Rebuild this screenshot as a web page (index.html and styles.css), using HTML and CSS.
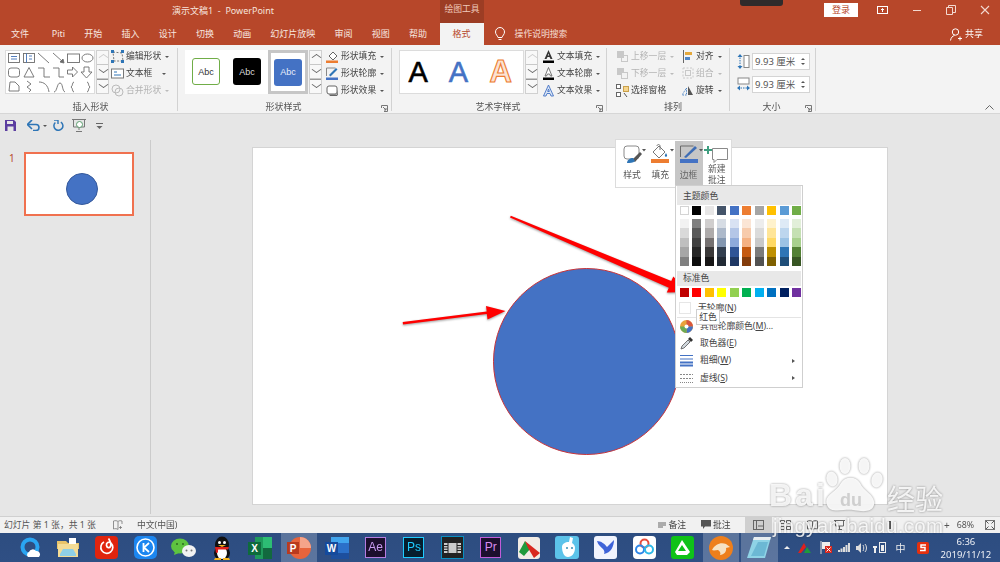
FILE: index.html
```html
<!DOCTYPE html>
<html lang="zh">
<head>
<meta charset="utf-8">
<title>演示文稿1 - PowerPoint</title>
<link rel="stylesheet" href="styles.css">
</head>
<body>
<div class="app">
  <header class="titlebar">
    <div class="title">演示文稿1&nbsp; - &nbsp;PowerPoint</div>
    <div class="ctx">绘图工具</div>
    <div class="webcam"></div>
    <button class="login">登录</button>
    <div class="winbtns">
      <svg width="12" height="10" viewBox="0 0 12 10"><rect x=".5" y="1.5" width="10" height="7" fill="none" stroke="#fff"/><path d="M5.5 7V3.5M4 5l1.5-1.5L7 5" stroke="#fff" fill="none"/></svg>
      <svg width="10" height="10" viewBox="0 0 10 10"><path d="M1 5.5h8" stroke="#f3d9d0"/></svg>
      <svg width="10" height="10" viewBox="0 0 10 10"><path d="M.5 2.5h6v7h-6zM2.500 2.500v-2h7v7h-3" fill="none" stroke="#f3d9d0"/></svg>
      <svg width="10" height="10" viewBox="0 0 10 10"><path d="M1 1l8 8M9 1l-8 8" stroke="#f3d9d0" stroke-width="1.1"/></svg>
    </div>
  </header>

  <nav class="tabs">
    <span class="tab first">文件</span><span class="tab">Piti</span><span class="tab">开始</span><span class="tab">插入</span><span class="tab">设计</span><span class="tab">切换</span><span class="tab">动画</span><span class="tab">幻灯片放映</span><span class="tab">审阅</span><span class="tab">视图</span><span class="tab">帮助</span><span class="tab active">格式</span>
    <svg class="bulb" width="12" height="14" viewBox="0 0 12 14"><path d="M4 10.500C3.500 8.500 1.500 7.500 1.500 5a4.500 4.500 0 0 1 9 0c0 2.500-2 3.500-2.500 5.500zM4.500 12.500h3" fill="none" stroke="#fff" stroke-width="1"/></svg>
    <span class="search">操作说明搜索</span>
    <span class="share">
      <svg width="12" height="13" viewBox="0 0 12 13"><circle cx="5.500" cy="4" r="3.200" fill="none" stroke="#fff"/><path d="M.5 12.500c.5-3 2-4.500 4-5M8 10.500h4M10 8.500v4" fill="none" stroke="#fff"/></svg>
      共享
    </span>
  </nav>

  <section class="ribbon">
    <div class="group g-shapes">
      <div class="grow">
        <div class="gallery shapes">
          <svg width="89" height="45" viewBox="5 50 89 45" fill="none" stroke="#6d6d6d" stroke-width=".9">
            <rect x="7.500" y="53.500" width="11" height="9"/><path d="M10 56.500h6M10 59h6" stroke="#3f6fb5"/>
            <rect x="22.500" y="53.500" width="11" height="9"/><path d="M25.500 53.500v9M28 56h3M28 59h3" stroke="#3f6fb5"/>
            <path d="M37 53l11 10M52 53l10 9"/><path d="M63 63l-4-1 3-3z" fill="#6d6d6d"/>
            <rect x="66.500" y="54" width="12" height="8.500"/><ellipse cx="86.500" cy="58" rx="5.500" ry="4"/>
            <rect x="7.500" y="68" width="11" height="9" rx="2.500"/><path d="M28 67.500l5 9.500H23z"/>
            <path d="M37 68h6v9h6M52 68h6v9h5"/><path d="M66.500 70h5v-3l5 5-5 5v-3h-5zM83 67h5v5h3l-5.500 6-5.500-6h3z"/>
            <path d="M9 82h5l4 4v5H8zM26 81l4 3-4 3 4 3-2 2M38 82c5 0 9 3 10 10M53 92c3 0 3-9 6-9s2 8 5 9"/>
            <path d="M73 82c-2 0-1 4-3 5 2 1 1 5 3 5M86 82c2 0 1 4 3 5-2 1-1 5-3 5"/>
          </svg>
        </div>
        <div class="spin"><i class="up off"></i><i class="dn"></i><i class="more"></i></div>
        <div class="cmds tight">
          <div class="cmd"><svg class="ic" width="13" height="13" viewBox="0 0 13 13"><path d="M2 2l9 1 1 8-9 0z" fill="none" stroke="#777" stroke-dasharray="2 1.500"/><path d="M0 0h3v3H0zM10 0h3v3h-3zM0 10h3v3H0zM10 10h3v3h-3z" fill="#2e75b6"/></svg>编辑形状<b class="caret"></b></div>
          <div class="cmd"><svg class="ic" width="13" height="13" viewBox="0 0 13 13"><rect x=".5" y="2" width="12" height="9" fill="#fff" stroke="#777"/><path d="M3 5h3M3 8h7" stroke="#2e75b6"/></svg>文本框<b class="caret wide"></b></div>
          <div class="cmd off"><svg class="ic" width="13" height="13" viewBox="0 0 13 13"><circle cx="5" cy="5" r="4" fill="none" stroke="#bbb"/><circle cx="8" cy="8" r="4" fill="none" stroke="#bbb"/></svg>合并形状<b class="caret"></b></div>
        </div>
      </div>
      <div class="glabel">插入形状</div>
    </div>

    <div class="group g-style">
      <div class="grow">
        <div class="gallery styles">
          <span class="abc a1">Abc</span><span class="abc a2">Abc</span><span class="sel"><span class="abc a3">Abc</span></span>
        </div>
        <div class="spin big"><i class="up"></i><i class="dn"></i><i class="more"></i></div>
        <div class="cmds">
          <div class="cmd"><svg class="ic" width="13" height="13" viewBox="0 0 13 13"><path d="M3 6l4-4 4 4-4 4z" fill="#fff" stroke="#666"/><path d="M0 10.500h12v2.500H0z" fill="#ed7d31"/></svg>形状填充<b class="caret"></b></div>
          <div class="cmd"><svg class="ic" width="13" height="13" viewBox="0 0 13 13"><path d="M.5 9V1h9" fill="none" stroke="#888"/><path d="M3 8l7-7 1.500 1.500-7 7z" fill="#2e75b6"/><path d="M0 10.500h12v2.500H0z" fill="#4472c4"/></svg>形状轮廓<b class="caret"></b></div>
          <div class="cmd"><svg class="ic" width="13" height="13" viewBox="0 0 13 13"><rect x="1" y="2" width="10" height="8" rx="2" fill="#fff" stroke="#666"/><path d="M3 10.500h8l1-5v5l-1 1.500H4z" fill="#666"/></svg>形状效果<b class="caret"></b></div>
        </div>
      </div>
      <div class="glabel lau">形状样式<svg class="launch" width="7" height="7" viewBox="0 0 7 7"><path d="M.5 3V.5h6v6H3M2 2l3 3M5 3v2H3" fill="none" stroke="#777"/></svg></div>
    </div>

    <div class="group g-art">
      <div class="grow">
        <div class="gallery arts">
          <span class="art k">A</span><span class="art b">A</span><span class="art o">A</span>
        </div>
        <div class="spin"><i class="up off"></i><i class="dn"></i><i class="more"></i></div>
        <div class="cmds">
          <div class="cmd"><svg class="ic" width="13" height="13" viewBox="0 0 13 13"><path d="M6.500 0L10.500 9H8.500L7.500 7h-2l-1 2h-2zM5.800 5.500h1.400L6.500 3.500z" fill="#333" fill-rule="evenodd"/><path d="M1 10.500h11V13H1z" fill="#000"/></svg>文本填充<b class="caret"></b></div>
          <div class="cmd"><svg class="ic" width="13" height="13" viewBox="0 0 13 13"><path d="M6.500 .5L10 9H8.500L7.500 7h-2l-1 2H3z" fill="#fff" stroke="#555" stroke-width=".8"/><path d="M1 10.500h11V13H1z" fill="#000"/></svg>文本轮廓<b class="caret"></b></div>
          <div class="cmd"><svg class="ic" width="13" height="13" viewBox="0 0 13 13"><path d="M6.500 1L11.500 12H9L8 9.500H5L4 12H1.500zM5.700 7.500h1.600L6.500 5z" fill="#dbe7f6" stroke="#4472c4" stroke-width=".9" fill-rule="evenodd"/></svg>文本效果<b class="caret"></b></div>
        </div>
      </div>
      <div class="glabel lau">艺术字样式<svg class="launch" width="7" height="7" viewBox="0 0 7 7"><path d="M.5 3V.5h6v6H3M2 2l3 3M5 3v2H3" fill="none" stroke="#777"/></svg></div>
    </div>

    <div class="group g-arrange">
      <div class="grow">
        <div class="cmds c1">
          <div class="cmd off"><svg class="ic" width="13" height="13" viewBox="0 0 13 13"><rect x="1" y="1" width="7" height="7" fill="#c8c8c8"/><rect x="5.500" y="5.500" width="6" height="6" fill="none" stroke="#c8c8c8"/></svg>上移一层<b class="caret"></b></div>
          <div class="cmd off"><svg class="ic" width="13" height="13" viewBox="0 0 13 13"><rect x="1" y="1" width="7" height="7" fill="#c8c8c8"/><rect x="5.500" y="5.500" width="6" height="6" fill="#f3f3f3" stroke="#c8c8c8"/></svg>下移一层<b class="caret"></b></div>
          <div class="cmd"><svg class="ic" width="13" height="13" viewBox="0 0 13 13"><rect x=".5" y=".5" width="4" height="4" fill="#fff" stroke="#666"/><rect x=".5" y="8.500" width="4" height="4" fill="#fff" stroke="#666"/><rect x="7.500" y="2.500" width="5" height="5" fill="#f6d58c" stroke="#c9a04c"/><path d="M8 9l3 4" stroke="#555"/></svg>选择窗格</div>
        </div>
        <div class="cmds c2">
          <div class="cmd"><svg class="ic" width="12" height="13" viewBox="0 0 12 13"><path d="M1.500 0v13" stroke="#666"/><rect x="3" y="2" width="7" height="3" fill="#e5a93c"/><rect x="3" y="7" width="5" height="3" fill="#4f86c6"/></svg>对齐<b class="caret"></b></div>
          <div class="cmd off"><svg class="ic" width="12" height="13" viewBox="0 0 12 13"><rect x="1" y="1" width="10" height="10" fill="none" stroke="#c8c8c8" stroke-dasharray="2 1.500"/><rect x="3.500" y="3.500" width="5" height="5" fill="none" stroke="#c8c8c8"/></svg>组合<b class="caret"></b></div>
          <div class="cmd"><svg class="ic" width="12" height="13" viewBox="0 0 12 13"><path d="M6 11V2l5 9z" fill="#555"/><path d="M4.500 11H0L4.500 4z" fill="none" stroke="#4f86c6" stroke-dasharray="1.500 1"/></svg>旋转<b class="caret"></b></div>
        </div>
      </div>
      <div class="glabel">排列</div>
    </div>

    <div class="group g-size">
      <div class="grow col">
        <div class="sizer">
          <svg width="13" height="15" viewBox="0 0 13 15"><rect x="7" y="1.500" width="5" height="12" fill="#fff" stroke="#888"/><path d="M3 1v13" stroke="#2e75b6" stroke-dasharray="1.500 1"/><path d="M3 0l2.500 3h-5zM3 15l2.500-3h-5z" fill="#2e75b6"/></svg>
          <div class="field"><span>9.93 厘米</span><em><i></i><i class="d"></i></em></div>
        </div>
        <div class="sizer">
          <svg width="13" height="15" viewBox="0 0 13 15"><rect x="1" y="1" width="11" height="6" fill="#fff" stroke="#888"/><path d="M1 11h11" stroke="#2e75b6" stroke-dasharray="1.500 1"/><path d="M0 11l3-2.500v5zM13 11l-3-2.500v5z" fill="#2e75b6"/></svg>
          <div class="field"><span>9.93 厘米</span><em><i></i><i class="d"></i></em></div>
        </div>
      </div>
      <div class="glabel lau">大小<svg class="launch" width="7" height="7" viewBox="0 0 7 7"><path d="M.5 3V.5h6v6H3M2 2l3 3M5 3v2H3" fill="none" stroke="#777"/></svg></div>
    </div>
    <svg class="collapse" width="9" height="5" viewBox="0 0 9 5"><path d="M.5 4.500l4-4 4 4" fill="none" stroke="#666"/></svg>
  </section>

  <div class="qat">
    <svg class="q-save" width="11" height="11" viewBox="0 0 11 11"><path d="M0 0h9l2 2v9H0z" fill="#5b3da0"/><path d="M2 1h6v3H2z" fill="#e6e6e6"/><path d="M2.500 6.500h6V11h-6z" fill="#e6e6e6"/></svg>
    <svg class="q-undo" width="14" height="11" viewBox="0 0 14 11"><path d="M1 4.500h8a3 3 0 0 1 0 6H6" fill="none" stroke="#2e75b6" stroke-width="1.600"/><path d="M5 0L.5 4.500 5 9" fill="none" stroke="#2e75b6" stroke-width="1.600"/></svg>
    <b class="caret q-drop"></b>
    <svg class="q-redo" width="11" height="11" viewBox="0 0 11 11"><path d="M3 2A4.500 4.500 0 1 0 8.500 2.500" fill="none" stroke="#2e75b6" stroke-width="1.500" transform="rotate(-10 5.500 6)"/><path d="M1 0h4v4" fill="none" stroke="#2e75b6" stroke-width="1.400"/></svg>
    <svg class="q-show" width="14" height="13" viewBox="0 0 14 13"><path d="M0 .5h14M1.500 1v7h11V1M7 8v3M4 12.500h6" fill="none" stroke="#777"/><circle cx="7.500" cy="5.500" r="3" fill="#fff" stroke="#5b9e6e"/></svg>
    <svg class="q-more" width="7" height="6" viewBox="0 0 7 6"><path d="M0 .5h7" stroke="#666"/><path d="M.5 3h6L3.500 6z" fill="#666"/></svg>
  </div>

  <main class="workspace">
    <aside class="thumbs">
      <span class="num">1</span>
      <div class="thumb"><span class="thumb-dot"></span></div>
    </aside>
    <div class="stage">
      <div class="slide"><span class="circle"></span></div>
    </div>

    <svg class="arrows" width="1000" height="379" viewBox="0 137 1000 379">
      <path d="M510 217.500l.8-1.800 160.500 65.300 2-4.500 15 15.500-21.500.5 2-4.700z" fill="#f00"/>
      <path d="M403 324.500l-.3-2.600 84-10.400-.7-5.500 19.500 5-18 8.500-.7-5.500z" fill="#f00"/>
    </svg>

    <div class="mini">
      <div class="mini-btn"><svg width="28" height="20" viewBox="0 0 28 20"><rect x="6" y="2" width="15" height="13" rx="3" fill="#fff" stroke="#8a8a8a"/><path d="M14 16l8-8 2 2-7 8z" fill="#555"/><path d="M9 19c0-3 3-5 6-5l2 3c-2 2-5 2-8 2z" fill="#2e75b6"/><path d="M24 5h4l-2 2.500z" fill="#555"/></svg><span class="ml">样式</span></div>
      <div class="mini-btn"><svg width="28" height="20" viewBox="0 0 28 20"><path d="M7 8l6-6 6 6-6 6z" fill="#fff" stroke="#777"/><path d="M11 2c0-2 3-2 3 0v4" fill="none" stroke="#777"/><path d="M20 9c1 2 2 3 0 4-2-1-1-2 0-4z" fill="#2e75b6"/><path d="M5 15h18v4H5z" fill="#ed7d31"/><path d="M24 5h4l-2 2.500z" fill="#555"/></svg><span class="ml">填充</span></div>
      <div class="mini-btn on"><svg width="28" height="20" viewBox="0 0 28 20"><path d="M5.500 13V2h13" fill="none" stroke="#6a6a6a"/><path d="M9 13L20 2l2 2L11 14z" fill="#3e6db5"/><path d="M5 15h18v4H5z" fill="#4472c4"/><path d="M24 5h4l-2 2.500z" fill="#555"/></svg><span class="ml">边框</span></div>
      <div class="mini-btn"><svg width="28" height="20" viewBox="0 0 28 20"><path d="M9.500 4.500h15v11H14l-3 3v-3H9.500z" fill="#fff" stroke="#8a8a8a"/><path d="M5 2v8M1 6h8" stroke="#3f9e80" stroke-width="2"/></svg><span class="ml">新建<br>批注</span></div>
    </div>

    <div class="menu">
      <div class="mhead">主题颜色</div>
      <div class="swatches top">
        <i class="w" style="background:#fff"></i><i style="background:#000"></i><i style="background:#e7e6e6"></i><i style="background:#44546a"></i><i style="background:#4472c4"></i><i style="background:#ed7d31"></i><i style="background:#a5a5a5"></i><i style="background:#ffc000"></i><i style="background:#5b9bd5"></i><i style="background:#70ad47"></i>
      </div>
      <div class="shades">
        <div><i style="background:#f2f2f2"></i><i style="background:#d9d9d9"></i><i style="background:#bfbfbf"></i><i style="background:#a6a6a6"></i><i style="background:#808080"></i></div>
        <div><i style="background:#7f7f7f"></i><i style="background:#595959"></i><i style="background:#404040"></i><i style="background:#262626"></i><i style="background:#0d0d0d"></i></div>
        <div><i style="background:#d0cece"></i><i style="background:#aeabab"></i><i style="background:#757171"></i><i style="background:#3a3838"></i><i style="background:#171616"></i></div>
        <div><i style="background:#d6dce4"></i><i style="background:#adb9ca"></i><i style="background:#8497b0"></i><i style="background:#333f4f"></i><i style="background:#222a35"></i></div>
        <div><i style="background:#d9e2f3"></i><i style="background:#b4c6e7"></i><i style="background:#8eaadb"></i><i style="background:#2f5496"></i><i style="background:#1f3864"></i></div>
        <div><i style="background:#fbe5d5"></i><i style="background:#f7cbac"></i><i style="background:#f4b183"></i><i style="background:#c55a11"></i><i style="background:#833c0b"></i></div>
        <div><i style="background:#ededed"></i><i style="background:#dbdbdb"></i><i style="background:#c9c9c9"></i><i style="background:#7b7b7b"></i><i style="background:#525252"></i></div>
        <div><i style="background:#fff2cc"></i><i style="background:#ffe598"></i><i style="background:#ffd965"></i><i style="background:#bf9000"></i><i style="background:#7f6000"></i></div>
        <div><i style="background:#deeaf6"></i><i style="background:#bdd6ee"></i><i style="background:#9cc3e5"></i><i style="background:#2e75b5"></i><i style="background:#1f4e79"></i></div>
        <div><i style="background:#e2efd9"></i><i style="background:#c5e0b3"></i><i style="background:#a8d08d"></i><i style="background:#538135"></i><i style="background:#375623"></i></div>
      </div>
      <div class="mhead second">标准色</div>
      <div class="swatches std">
        <i style="background:#c00000"></i><i style="background:#f00"></i><i style="background:#ffc000"></i><i style="background:#ff0"></i><i style="background:#92d050"></i><i style="background:#00b050"></i><i style="background:#00b0f0"></i><i style="background:#0070c0"></i><i style="background:#002060"></i><i style="background:#7030a0"></i>
      </div>
      <div class="mrow first"><span class="nofill"></span><span>无轮廓(<u>N</u>)</span></div>
      <div class="mrow line"><svg width="13" height="13" viewBox="0 0 13 13"><circle cx="6.500" cy="6.500" r="6.500" fill="#e9a33c"/><path d="M6.500 6.500L6.500 0A6.500 6.500 0 0 1 13 6.500z" fill="#d9573d"/><path d="M6.500 6.500L13 6.500A6.500 6.500 0 0 1 6.500 13z" fill="#4472c4"/><path d="M6.500 6.500L6.500 13A6.500 6.500 0 0 1 0 6.500z" fill="#6cab55"/><circle cx="6.500" cy="6.500" r="2" fill="#fff"/></svg><span>其他轮廓颜色(<u>M</u>)...</span></div>
      <div class="mrow"><svg width="13" height="13" viewBox="0 0 13 13"><path d="M1 12l1-3 6-6 2 2-6 6z" fill="#cfd6dc" stroke="#555" stroke-width=".8"/><path d="M8 2l2-2 3 3-2 2z" fill="#333"/></svg><span>取色器(<u>E</u>)</span></div>
      <div class="mrow"><svg width="13" height="13" viewBox="0 0 13 13"><path d="M0 1.500h13M0 5h13" stroke="#4472c4"/><path d="M0 8.500h13M0 11.500h13" stroke="#4472c4" stroke-width="2"/></svg><span>粗细(<u>W</u>)</span><b class="sub"></b></div>
      <div class="mrow"><svg width="13" height="13" viewBox="0 0 13 13"><path d="M0 2.500h13M0 6.500h13" stroke="#888" stroke-dasharray="2 1"/><path d="M0 10.500h13" stroke="#888" stroke-dasharray="1 1"/></svg><span>虚线(<u>S</u>)</span><b class="sub"></b></div>
    </div>
    <div class="tip">红色</div>
  </main>

  <footer class="status">
    <span class="st-a">幻灯片 第 1 张，共 1 张</span>
    <svg class="st-b" width="10" height="10" viewBox="0 0 10 10"><path d="M5 1.500C4 .5 2 .5.500 1v8C2 8.500 4 8.500 5 9.500V1.500zM5 1.500C6 .5 7.500.5 9 1v3M7.500 6v3M6 7.500h3" fill="none" stroke="#777" stroke-width=".8"/></svg>
    <span class="st-c">中文(中国)</span>
    <span class="st-r">
      <span class="st-item"><svg width="8" height="8" viewBox="0 0 8 8"><path d="M0 2h8M0 4h8M0 6h5" stroke="#666"/></svg>备注</span>
      <span class="st-item"><svg width="10" height="9" viewBox="0 0 10 9"><path d="M0 0h10v6.500H4L2 9V6.500H0z" fill="#555"/></svg>批注</span>
      <span class="view on"><svg width="11" height="10" viewBox="0 0 11 10"><rect x=".5" y=".5" width="10" height="9" fill="none" stroke="#666"/><path d="M3.500 1v8M5 6h5" stroke="#666"/></svg></span>
      <span class="view"><svg width="11" height="10" viewBox="0 0 11 10"><path d="M.5.500h4v3h-4zM6.500.500h4v3h-4zM.5 6.500h4v3h-4zM6.500 6.500h4v3h-4z" fill="none" stroke="#666"/></svg></span>
      <span class="view"><svg width="11" height="10" viewBox="0 0 11 10"><path d="M5.500 1.500C4 .5 2 .5.500 1v8C2 8.500 4 8.500 5.500 9.500 7 8.500 9 8.500 10.500 9V1C9 .5 7 .5 5.500 1.500zV9.500" fill="none" stroke="#666"/></svg></span>
      <span class="view"><svg width="11" height="10" viewBox="0 0 11 10"><path d="M0 .5h11M1.500 1v5h8V1M5.500 6v3M3 9.500h5" fill="none" stroke="#666"/></svg></span>
      <span class="zoomer"><b class="knob"></b><b class="plus">+</b></span>
      <span class="pct">68%</span>
      <svg class="fit" width="10" height="10" viewBox="0 0 10 10"><rect x=".5" y=".5" width="9" height="9" fill="none" stroke="#777"/><path d="M1 1l2.500 2.500M9 1L6.500 3.500M1 9l2.500-2.500M9 9L6.500 6.500" stroke="#555"/></svg>
    </span>
  </footer>

  <div class="taskbar">
    <div class="tb"><svg width="22" height="22" viewBox="0 0 22 22"><circle cx="11" cy="10" r="7.500" fill="none" stroke="#2aa5f2" stroke-width="4"/><path d="M9 20a3 3 0 0 1 1-5 4 4 0 0 1 7-1 3.500 3.500 0 0 1 3 6z" fill="#fff"/></svg></div>
    <div class="tb"><svg width="24" height="22" viewBox="0 0 24 22"><path d="M1 4h9l2 2h11v6H1z" fill="#e9c46a"/><path d="M2 7h20v13H2z" fill="#f4dc96"/><path d="M7 12h10l3 5v2H4v-2z" fill="#8fd0e6"/><path d="M13 1h7v6h-7z" fill="#fff"/></svg></div>
    <div class="tb"><svg width="23" height="23" viewBox="0 0 23 23"><rect width="23" height="23" rx="4" fill="#e0240e"/><path d="M9 6a6 6 0 1 0 7 1c-2-2-5 0-4.500 2.500s3 3 4 1-.5-6-2-8" fill="none" stroke="#fff" stroke-width="1.700"/></svg></div>
    <div class="tb"><svg width="23" height="23" viewBox="0 0 23 23"><rect width="23" height="23" rx="5" fill="#1c86f0"/><circle cx="11.500" cy="11.500" r="8.500" fill="none" stroke="#fff" stroke-width="1.600"/><path d="M9.500 7v9M15 7l-5 4.500 5 4.500" fill="none" stroke="#fff" stroke-width="1.800"/></svg></div>
    <div class="tb"><svg width="25" height="20" viewBox="0 0 25 20"><ellipse cx="9" cy="8" rx="9" ry="7.500" fill="#5ec440"/><path d="M4 13l-1 4 5-2z" fill="#5ec440"/><ellipse cx="18" cy="13" rx="7" ry="6" fill="#f2f2f2"/><circle cx="15.500" cy="12.500" r="1" fill="#777"/><circle cx="20.500" cy="12.500" r="1" fill="#777"/><circle cx="6" cy="6" r="1" fill="#2f6b1f"/><circle cx="12" cy="6" r="1" fill="#2f6b1f"/></svg></div>
    <div class="tb"><svg width="20" height="24" viewBox="0 0 20 24"><ellipse cx="10" cy="9" rx="7" ry="8.500" fill="#111"/><ellipse cx="10" cy="17" rx="8" ry="7" fill="#111"/><ellipse cx="10" cy="17" rx="5" ry="6" fill="#fff"/><circle cx="7.500" cy="6.500" r="1.500" fill="#fff"/><circle cx="12.500" cy="6.500" r="1.500" fill="#fff"/><path d="M3 11h14l-1 2.500H6v3l-2 .5z" fill="#e0201c"/><path d="M6 9h8l-4 2z" fill="#f6b51e"/><path d="M3 22h6v2H2zM11 22h6l1 2h-7z" fill="#f6b51e"/></svg></div>
    <div class="tb"><svg width="24" height="22" viewBox="0 0 24 22"><path d="M7 0h17v22H7z" fill="#1f9a5c"/><path d="M15 0h9v11h-9z" fill="#2dbd74"/><path d="M15 11h9v11h-9z" fill="#12693f"/><rect y="5" width="13" height="13" fill="#0e6b3c"/><text x="6.500" y="15" class="tbtxt" text-anchor="middle" fill="#fff">X</text></svg></div>
    <div class="tb on"><svg width="24" height="22" viewBox="0 0 24 22"><circle cx="13" cy="11" r="11" fill="#e8643c"/><path d="M13 0a11 11 0 0 1 11 11H13z" fill="#f5a48a"/><rect y="5" width="12" height="12" fill="#b93a1e"/><text x="6" y="15" class="tbtxt" text-anchor="middle" fill="#fff">P</text></svg></div>
    <div class="tb"><svg width="24" height="22" viewBox="0 0 24 22"><path d="M6 0h18v22H6z" fill="#2b70c9"/><path d="M6 0h18v6H6z" fill="#41a5ee"/><path d="M6 16h18v6H6z" fill="#1d4f9e"/><rect y="5" width="13" height="13" fill="#154a9c"/><text x="6.500" y="15" class="tbtxt" text-anchor="middle" fill="#fff">W</text></svg></div>
    <div class="tb"><span class="adobe ae">Ae</span></div>
    <div class="tb"><span class="adobe ps">Ps</span></div>
    <div class="tb"><svg width="23" height="23" viewBox="0 0 23 23"><rect x=".5" y=".5" width="22" height="22" fill="#222" stroke="#0a8fc0"/><rect x="3" y="7" width="17" height="10" fill="#ccc"/><path d="M7 7v10M16 7v10M3 9.500h4M3 12h4M3 14.500h4M16 9.500h4M16 12h4M16 14.500h4" stroke="#222"/></svg></div>
    <div class="tb"><span class="adobe pr">Pr</span></div>
    <div class="tb"><svg width="22" height="22" viewBox="0 0 22 22"><rect width="22" height="22" rx="3" fill="#f1ece6"/><path d="M1 15L7 4l5 8-6 7z" fill="#1f9a3c"/><path d="M7 4l15 12-6 5-6-10z" fill="#d9281e"/></svg></div>
    <div class="tb"><svg width="24" height="23" viewBox="0 0 24 23"><rect width="24" height="23" rx="3" fill="#5cc3ea"/><path d="M7 11c0-3 3-5 7-5l1-5 3 1-1 5c2 1 3 3 3 5 0 5-3 9-7 9s-6-5-6-10z" fill="#fff"/><circle cx="12" cy="12" r="1" fill="#3a8fb5"/><circle cx="17" cy="12" r="1" fill="#3a8fb5"/></svg></div>
    <div class="tb"><svg width="23" height="23" viewBox="0 0 23 23"><rect width="23" height="23" rx="3" fill="#f1f4fd"/><path d="M3 5c4 0 8 3 10 6l7-7c0 6-3 13-10 14 1-2 0-4-1-5-2-2-5-4-6-8z" fill="#3e63d8"/></svg></div>
    <div class="tb"><svg width="23" height="23" viewBox="0 0 23 23"><rect width="23" height="23" rx="4" fill="#fff"/><circle cx="11.500" cy="7.500" r="4" fill="none" stroke="#e74b3c" stroke-width="2"/><circle cx="7" cy="13.500" r="4" fill="none" stroke="#2d86e8" stroke-width="2"/><circle cx="16" cy="13.500" r="4" fill="none" stroke="#2db9e8" stroke-width="2"/></svg></div>
    <div class="tb"><svg width="23" height="23" viewBox="0 0 23 23"><rect width="23" height="23" rx="3" fill="#0fc218"/><path d="M11 4l8 12-3 3H6l-2-3z" fill="#fff"/><path d="M11 9l-4 6h8z" fill="#0fc218"/></svg></div>
    <div class="tb on"><svg width="24" height="24" viewBox="0 0 24 24"><circle cx="12" cy="12" r="12" fill="#ee7f1c"/><path d="M3 14c3-6 9-8 14-6l4 3-4 1c1 3-2 7-6 7 1-2 0-4-2-5-2 0-4 1-6 0z" fill="#f6e2c4"/></svg></div>
    <div class="tb on"><svg width="26" height="24" viewBox="0 0 26 24"><path d="M8 1h17l-6 21H1z" fill="#8fd3e6"/><path d="M8 1h17l-1 3H7z" fill="#e8eef1"/><path d="M12 6h10l-4 14H5z" fill="#6cb8d4"/></svg></div>
    <div class="tray">
      <b class="t-up"></b>
      <svg class="t-a" width="13" height="11" viewBox="0 0 13 11"><path d="M0 11L6 1l2 4-5 6z" fill="#e0201c"/><path d="M6 11l3-6 4 6z" fill="#1f9a3c"/></svg>
      <svg width="12" height="13" viewBox="0 0 12 13"><path d="M1 0v13" stroke="#ddd"/><path d="M2 1h8v7H2z" fill="#eee"/><rect x="5" y="5" width="7" height="7" fill="#d9281e"/><path d="M6.500 6.500l4 4M10.500 6.500l-4 4" stroke="#fff"/></svg>
      <svg width="12" height="9" viewBox="0 0 12 9" fill="#ddd"><path d="M0 7h2v2H0zM2.500 5.500h2V9h-2zM5 4h2v5H5zM7.500 2h2v7h-2zM10 0h2v9h-2z"/></svg>
      <svg width="11" height="10" viewBox="0 0 11 10"><path d="M0 3h2l3-3v10L2 7H0z" fill="#ddd"/><path d="M7 2c1 2 1 4 0 6M9 1c2 2 2 6 0 8" fill="none" stroke="#ddd"/></svg>
      <svg width="13" height="11" viewBox="0 0 13 11"><path d="M1 1v3M3 1v3M0 4h4v2H3v5H1V6H0z" fill="#eee"/><rect x="6.500" y=".5" width="6" height="10" fill="none" stroke="#eee"/><rect x="8" y="3" width="3" height="6" fill="#eee"/></svg>
      <span class="t-zh">中</span>
      <svg width="12" height="12" viewBox="0 0 12 12"><rect width="12" height="12" rx="2" fill="#e4300f"/><path d="M9 3H4v2.500h4v3H3" fill="none" stroke="#fff" stroke-width="1.500"/></svg>
      <div class="clock"><span>6:36</span><span>2019/11/12</span></div>
    </div>
  </div>

  <div class="mark" aria-hidden="true">
    <svg class="paw" width="62" height="60" viewBox="0 0 62 60" fill="#fff"><ellipse cx="10" cy="24" rx="5.500" ry="7.500" transform="rotate(-15 10 24)"/><ellipse cx="23" cy="11" rx="5.500" ry="8"/><ellipse cx="42" cy="11" rx="5.500" ry="8"/><ellipse cx="55" cy="25" rx="5.500" ry="7.500" transform="rotate(15 55 25)"/><path d="M5 50c-4-10 9-12 14-22 4-7 15-7 19 0 4 9 16 12 14 22-2 7-10 7-21 5-10-1-23 4-26-5z"/></svg>
    <span class="m-a">Bai</span><span class="m-b">du</span><span class="m-c">经验</span>
    <span class="m-d">jingyan.baidu.com</span>
  </div>
</div>
</body>
</html>
```
FILE: styles.css
```css
*{box-sizing:border-box;margin:0;padding:0}
html,body{width:1000px;height:562px;overflow:hidden}
body{font-family:"Noto Sans","Noto Sans CJK SC","Liberation Sans",sans-serif;font-size:9px;color:#444;line-height:1.2}
.app{position:relative;width:1000px;height:562px;display:flex;flex-direction:column;overflow:hidden;filter:blur(.35px)}

.titlebar{height:23px;background:#b7472a;color:#f6e3dc;display:flex;align-items:center;position:relative;flex:none}
.title{margin-left:172px;width:268px;font-size:9px;white-space:nowrap}
.ctx{width:44px;height:23px;background:#9c3d24;text-align:center;line-height:19px;color:#efc9bb;font-size:8.800px;white-space:nowrap}
.webcam{width:43px;height:6px;align-self:flex-start;margin-left:256px;background:#2f2b2b;border-radius:0 0 3px 3px}
.login{margin-left:41px;width:34px;height:14px;margin-top:-4px;background:#fff;color:#b7472a;border:0;font:9px/14px "Noto Sans CJK SC",sans-serif}
.winbtns{display:flex;align-items:center;gap:24px;margin-left:19px;margin-top:-4px}
.winbtns svg:nth-child(1){margin-right:-1px}

.tabs{height:22px;background:#b7472a;display:flex;align-items:center;padding-left:1.500px;color:#f8e7e0;flex:none}
.tab{padding:0 9.600px;font-size:9px;line-height:22px;white-space:nowrap}
.tab.first{margin-right:3.500px}
.tab.active{background:#f3f3f3;color:#b7472a;padding:0 13px;margin-left:3px;height:22px}
.bulb{margin-left:10px}
.search{margin-left:9px;font-size:8.800px;color:#f5dcd2}
.share{margin-left:auto;margin-right:17px;display:flex;align-items:center;gap:3px;color:#fff}

.ribbon{height:69px;background:#f3f3f3;border-bottom:1px solid #d6d6d6;display:flex;position:relative;flex:none;padding-left:3px}
.group{display:flex;flex-direction:column;padding-top:5px;position:relative}
.group::after{content:"";position:absolute;right:0;top:3px;bottom:2px;width:1px;background:#d2d2d2}
.grow{display:flex;height:46px}
.col{flex-direction:column}
.glabel{flex:1;display:flex;align-items:center;justify-content:center;font-size:9px;color:#555;position:relative;padding-top:5px}
.glabel.lau{padding-right:10px}
.launch{position:absolute;right:4px;bottom:1px}
.g-shapes{width:175px}
.g-style{width:214px;padding-left:7px}
.g-art{width:215px;padding-left:7px}
.g-arrange{width:123px;padding-left:9px}
.g-size{width:86px;padding-left:7px}
.collapse{position:absolute;right:6px;bottom:3px}

.gallery{background:#fff;height:44px;flex:none}
.shapes{width:90px;margin-left:2px;border:1px solid #dcdcdc;overflow:hidden}
.shapes svg{display:block;margin-top:-1px}
.spin{width:13px;height:44px;display:flex;flex-direction:column;flex:none;margin-left:1px;border:1px solid #d0d0d0;background:#f8f8f8}
.spin i{display:block;flex:1;position:relative;border-bottom:1px solid #c8c8c8}
.spin i:last-child{border-bottom:0}
.spin i::before{content:"";position:absolute;left:2.500px;top:3px;width:6px;height:6px;border-left:1px solid #666;border-top:1px solid #666;transform:scaleY(.7) rotate(45deg)}
.spin i.dn::before,.spin i.more::before{transform:scaleY(.7) rotate(225deg);top:1px}
.spin i.more{border-top:1px solid #999}
.spin i.off::before{border-color:#ccc}
.cmds{display:flex;flex-direction:column;margin-left:4px;margin-top:-2px}
.cmds.tight{margin-left:2px}
.cmd{height:17px;flex:none;display:flex;align-items:center;white-space:nowrap;font-size:8.800px;color:#444}
.cmd.off{color:#b4b4b4}
.ic{margin-right:2px;flex:none}
.caret{display:inline-block;width:0;height:0;border:2px solid transparent;border-top:2.500px solid #555;border-bottom:0;margin-left:4px}
.caret.wide{margin-left:10px}
.cmd.off .caret{border-top-color:#bbb}

.styles{width:123px;display:flex;align-items:center;padding-left:7px;gap:13px}
.abc{width:28px;height:27px;border-radius:3px;display:flex;align-items:center;justify-content:center;font:9px "Liberation Sans",sans-serif;flex:none;margin-top:-1px}
.a1{background:#fff;border:1px solid #70ad47;color:#333}
.a2{background:#000;color:#ddd}
.a3{background:#4472c4;color:#e8eefa;margin:0}
.sel{width:40px;height:44px;margin-left:-6px;border:3px solid #c6c6c6;display:flex;align-items:center;justify-content:center;flex:none}

.arts{width:125px;border:1px solid #dcdcdc;display:flex;align-items:center;justify-content:space-around;padding:0 2px}
.art{font:29px/40px "Liberation Sans",sans-serif;width:36px;text-align:center}
.art.k{color:#000;-webkit-text-stroke:.6px #000;margin-left:-4px}
.art.b{color:#4472c4;-webkit-text-stroke:.6px #4472c4}
.art.o{color:#fbe3d3;-webkit-text-stroke:1.100px #ed7d31;font-weight:700;font-size:31px;margin-left:2px}

.c1{width:66px;margin-left:0}
.c2{margin-left:0}

.sizer{display:flex;align-items:center;gap:2px;height:23px}
.field{width:58px;height:17px;background:#fff;border:1px solid #d4d4d4;display:flex;align-items:center;justify-content:space-between;padding:0 4px 0 2px;font-size:9.500px;color:#555;white-space:nowrap}
.field em{display:flex;flex-direction:column;gap:3px}
.field i{display:block;border:2px solid transparent;border-bottom:2.500px solid #555;border-top:0}
.field i.d{border-top:2.500px solid #555;border-bottom:0}

.qat{height:23px;background:#e6e6e6;display:flex;align-items:center;padding-left:5px;flex:none}
.q-undo{margin-left:11px}
.q-drop{margin-left:2px}
.q-redo{margin-left:6px}
.q-show{margin-left:8px}
.q-more{margin-left:10px}

.workspace{flex:1;min-height:0;background:#e6e6e6;display:flex;position:relative}
.thumbs{width:151px;border-right:1px solid #cbcbcb;margin:3px 0 2px;display:flex;align-items:flex-start;padding:12px 0 0 9px;flex:none}
.num{color:#b7472a;font-size:10px;line-height:12px;width:15px}
.thumb{width:110px;height:64px;background:#fff;border:2.500px solid #f0714f;display:flex;align-items:center;justify-content:center}
.thumb-dot{width:32px;height:32px;border-radius:50%;background:#4472c4;border:1px solid #35599b;margin-left:6px;margin-top:10px}
.stage{flex:1;padding:10px 112px 11px 101px}
.slide{height:358px;background:#fff;border:1px solid #d4d4d4;position:relative}
.circle{position:absolute;left:240px;top:120px;width:187px;height:187px;border-radius:50%;background:#4472c4;border:1px solid #c8343a}
.arrows{position:absolute;left:0;top:0;pointer-events:none;filter:drop-shadow(0 1.500px 1px rgba(0,0,0,.4))}

.mini{position:absolute;left:615px;top:2px;width:117px;height:49px;background:#fff;border:1px solid #dcdcdc;display:flex;padding:1px 0 0 2px}
.mini-btn{width:28.500px;display:flex;flex-direction:column;align-items:center;font-size:8.800px;line-height:11px;color:#555;padding-top:3px;text-align:center}
.mini-btn svg{flex:none}
.ml{flex:1;display:flex;align-items:center;height:24px;max-height:24px;margin-top:-1px}
.mini-btn.on{background:#c6c6c6;height:47px;color:#666}

.menu{position:absolute;left:675px;top:48px;width:128px;height:203px;background:#fff;border:1px solid #cfcfcf;padding:0 1px}
.mhead{height:19px;background:#e8e8e8;font-size:8.800px;line-height:20px;padding-left:6px;color:#444}
.mhead.second{height:15px;line-height:15px;margin-top:5px}
.swatches{display:flex;padding-left:2.500px;gap:3.500px}
.swatches i{width:9px;height:9px;display:block;flex:none}
.swatches.top{height:14px;padding-bottom:3px;align-items:center}
.swatches.std{height:13px;align-items:center}
.swatches .w{border:1px solid #d4d4d4}
.shades{display:flex;padding-left:2.500px;gap:3.500px}
.shades div{width:9px;display:flex;flex-direction:column}
.shades i{display:block;height:9.400px}
.mrow{height:17.500px;display:flex;align-items:center;font-size:8.800px;color:#444;padding-left:3px;gap:7px;position:relative}
.mrow u{text-decoration:underline}
.mrow.first{height:18px;padding-left:2px}
.mrow.line{border-top:1px solid #e4e4e4}
.nofill{width:12px;height:12px;border:1px solid #e6e6e6;flex:none}
.mrow .sub{position:absolute;right:6px;border:2.500px solid transparent;border-left:3px solid #555;border-right:0}
.tip{position:absolute;left:696px;top:172px;width:24px;height:16px;background:#fff;border:1px solid #cfcfcf;font-size:8.800px;line-height:14px;text-align:center;color:#444}

.status{height:17px;background:#f1f1f1;border-top:1px solid #d0d0d0;display:flex;align-items:center;flex:none;color:#555;white-space:nowrap;font-size:8.800px}
.st-a{margin-left:4px;width:109px}
.st-c{margin-left:14px}
.st-r{margin-left:auto;display:flex;align-items:center;height:16px;padding-right:5px}
.st-item{display:flex;align-items:center;gap:2px;margin-right:15px;color:#444}
.st-item + .st-item{margin-right:14px}
.view{width:27px;height:16px;display:flex;align-items:center;justify-content:center}
.view.on{background:#cfcfcf}
.zoomer{display:flex;align-items:center;width:80px;margin-left:18px;position:relative;height:16px}
.knob{position:absolute;left:18px;top:4px;width:2px;height:8px;background:#555}
.plus{position:absolute;right:1px;top:1px;font-weight:400;font-size:10px;line-height:14px}
.pct{margin-left:6px;font-size:8.800px}
.fit{margin-left:11px}

.taskbar{height:29px;background:linear-gradient(#2d4d80,#2f4f84);display:flex;align-items:center;padding-left:10.800px;flex:none;color:#e6e9f0}
.tb{width:38.400px;height:29px;display:flex;align-items:center;justify-content:center;flex:none;border:1.500px solid transparent;border-width:0 1.500px;background-clip:padding-box}
.tb.on{background-color:rgba(255,255,255,.22)}
.tbtxt{font:bold 10px "Liberation Sans",sans-serif}
.adobe{width:21px;height:21px;background:#1c0f2e;font:12px/19px "Liberation Sans",sans-serif;text-align:center;display:block;border:1.500px solid}
.ae{color:#c79bf0;border-color:#b57ce0}
.ps{background:#061e2e;color:#1ecbff;border-color:#1ecbff}
.pr{color:#d98cf0;border-color:#c05cd8}
.tray{display:flex;align-items:center;margin-left:5px;gap:6px;flex:1}
.t-up{border:3px solid transparent;border-bottom:3.500px solid #eee;border-top:0;margin-right:2px}
.t-a{margin-right:3px}
.t-zh{font-size:10px;color:#eee;margin:0 5px 0 4px}
.clock{display:flex;flex-direction:column;align-items:center;font-size:9.500px;line-height:13px;margin-left:6px;color:#eef0f5;white-space:nowrap}

.mark{position:absolute;left:768px;top:455px;width:185px;height:80px;color:rgba(255,255,255,.85);pointer-events:none;filter:drop-shadow(0 0 1px rgba(0,0,0,.45))}
.paw{position:absolute;left:54px;top:0;opacity:.9}
.m-a,.m-b,.m-c,.m-d{position:absolute;white-space:nowrap;font-family:"Liberation Sans",sans-serif}
.m-a{left:1px;top:21px;font-size:32px;font-weight:700;line-height:38px;letter-spacing:3px}
.m-b{left:72px;top:33px;font-size:18px;font-weight:700;line-height:24px;color:#cfcfcf}
.m-c{left:119px;top:28px;font-size:28px;line-height:30px;font-family:"Noto Sans CJK SC",sans-serif}
.m-d{left:5px;top:60px;font-size:20.500px;line-height:22px;letter-spacing:.3px}
```
